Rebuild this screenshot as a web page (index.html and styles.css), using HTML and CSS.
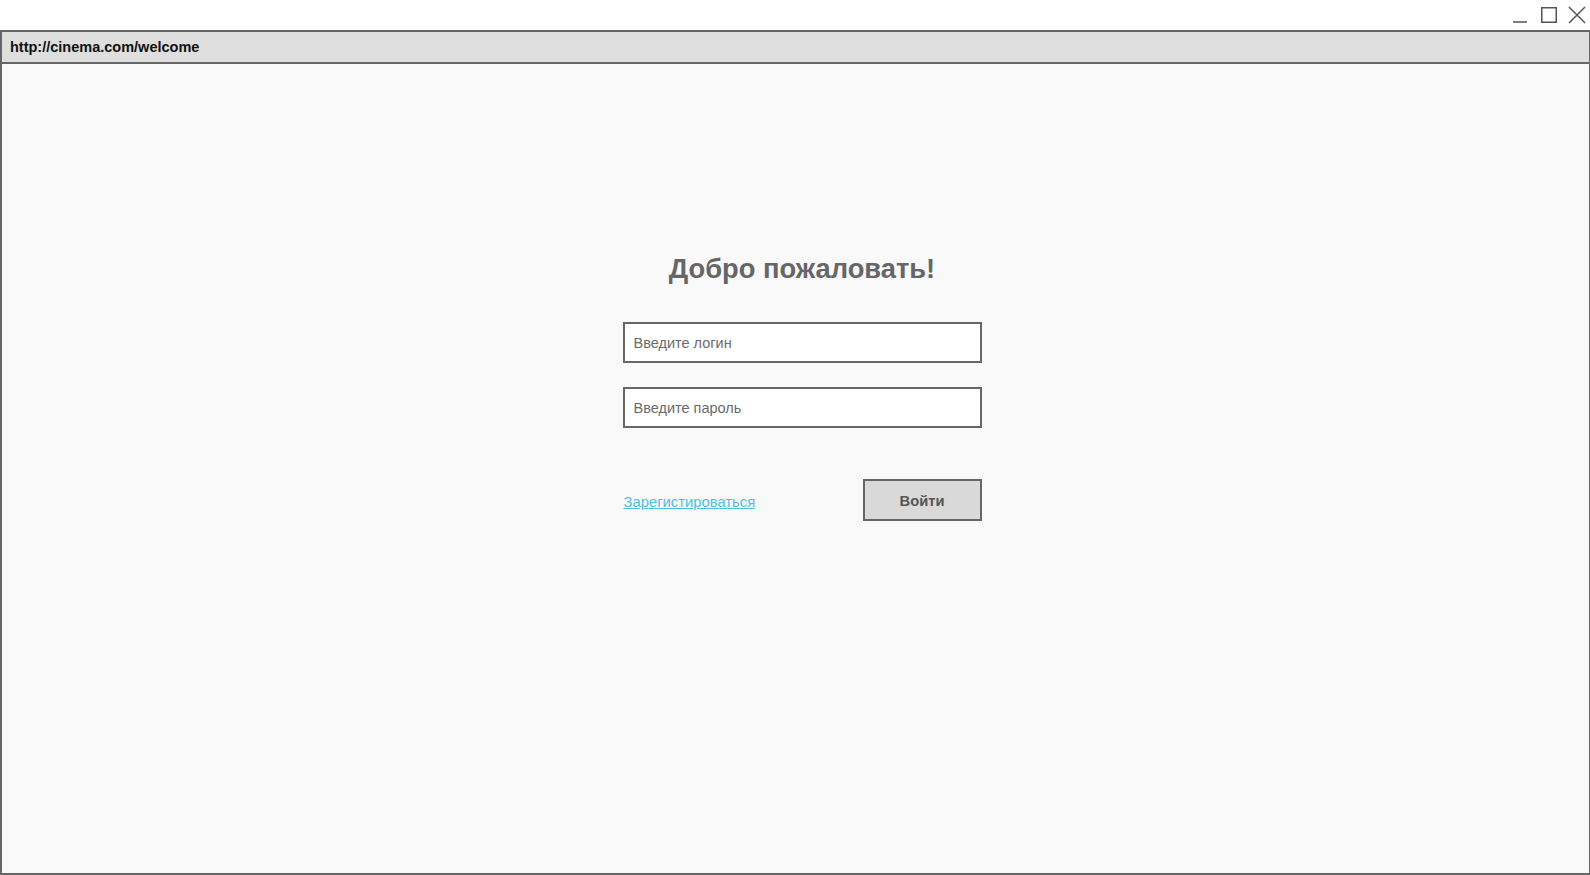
FILE: index.html
```html
<!DOCTYPE html>
<html lang="ru">
<head>
  <meta charset="UTF-8">
  <title>Добро пожаловать</title>
  <link rel="stylesheet" href="styles.css">
</head>
<body>
  <div class="titlebar">
    <!-- кнопки окна -->
    <svg class="ctrl" width="18" height="18" viewBox="0 0 18 18"><line x1="1" y1="16" x2="15" y2="16" stroke="#555" stroke-width="1.5"/></svg>
    <svg class="ctrl" width="18" height="18" viewBox="0 0 18 18"><rect x="1.75" y="1.75" width="14.5" height="14.5" fill="none" stroke="#555" stroke-width="1.5"/></svg>
    <svg class="ctrl" width="18" height="18" viewBox="0 0 18 18"><path d="M1 1 L17 17 M17 1 L1 17" stroke="#555" stroke-width="1.5"/></svg>
  </div>
  <div class="window">
    <div class="address">http://cinema.com/welcome</div>
    <div class="content">
      <div class="login">
        <h1>Добро пожаловать!</h1>
        <input class="field" type="text" placeholder="Введите логин">
        <input class="field" type="password" placeholder="Введите пароль">
        <div class="actions">
          <a href="#" class="register">Зарегистироваться</a>
          <button class="enter">Войти</button>
        </div>
      </div>
    </div>
  </div>
</body>
</html>
```

FILE: styles.css
```css
    html, body {
      margin: 0;
      height: 100%;
    }
    body {
      font-family: 'Liberation Sans', Arial, sans-serif;
      background: #fff;
      display: flex;
      flex-direction: column;
      overflow: hidden;
    }
    .titlebar {
      height: 30px;
      display: flex;
      justify-content: flex-end;
      align-items: flex-start;
      gap: 10px;
      padding: 6px 4px 0 0;
      box-sizing: border-box;
    }
    .ctrl {
      display: block;
    }
    .window {
      flex: 1;
      display: flex;
      flex-direction: column;
      border: 2px solid #666;
      border-top-width: 1px;
      border-right-width: 1px;
      background: #f9f9f9;
    }
    .address {
      height: 30px;
      line-height: 31px;
      padding-left: 8px;
      background: #dedede;
      border-top: 1px solid #666;
      border-bottom: 2px solid #666;
      font-size: 14.5px;
      font-weight: bold;
      color: #111;
    }
    .content {
      flex: 1;
      display: flex;
      justify-content: center;
      padding: 189px 0 0 13px;
    }
    .login {
      width: 359px;
      display: flex;
      flex-direction: column;
    }
    h1 {
      margin: 0 0 37px;
      text-align: center;
      font-size: 27.3px;
      line-height: 32px;
      color: #666;
    }
    .field {
      height: 41px;
      box-sizing: border-box;
      border: 2px solid #666;
      background: #fff;
      padding: 0 9px;
      font-family: inherit;
      font-size: 14.5px;
      color: #333;
      margin-bottom: 24px;
      outline: none;
    }
    .field::placeholder {
      color: #6a6a6a;
    }
    .actions {
      display: flex;
      justify-content: space-between;
      align-items: center;
      margin-top: 27px;
    }
    .register {
      font-size: 14.8px;
      color: #4ec0de;
      margin-left: 1px;
      margin-top: 4px;
    }
    .enter {
      width: 119px;
      height: 42px;
      padding-top: 2px;
      border: 2px solid #666;
      background: #d9d9d9;
      font-family: inherit;
      font-size: 14.7px;
      font-weight: bold;
      color: #555;
      cursor: pointer;
    }
```
